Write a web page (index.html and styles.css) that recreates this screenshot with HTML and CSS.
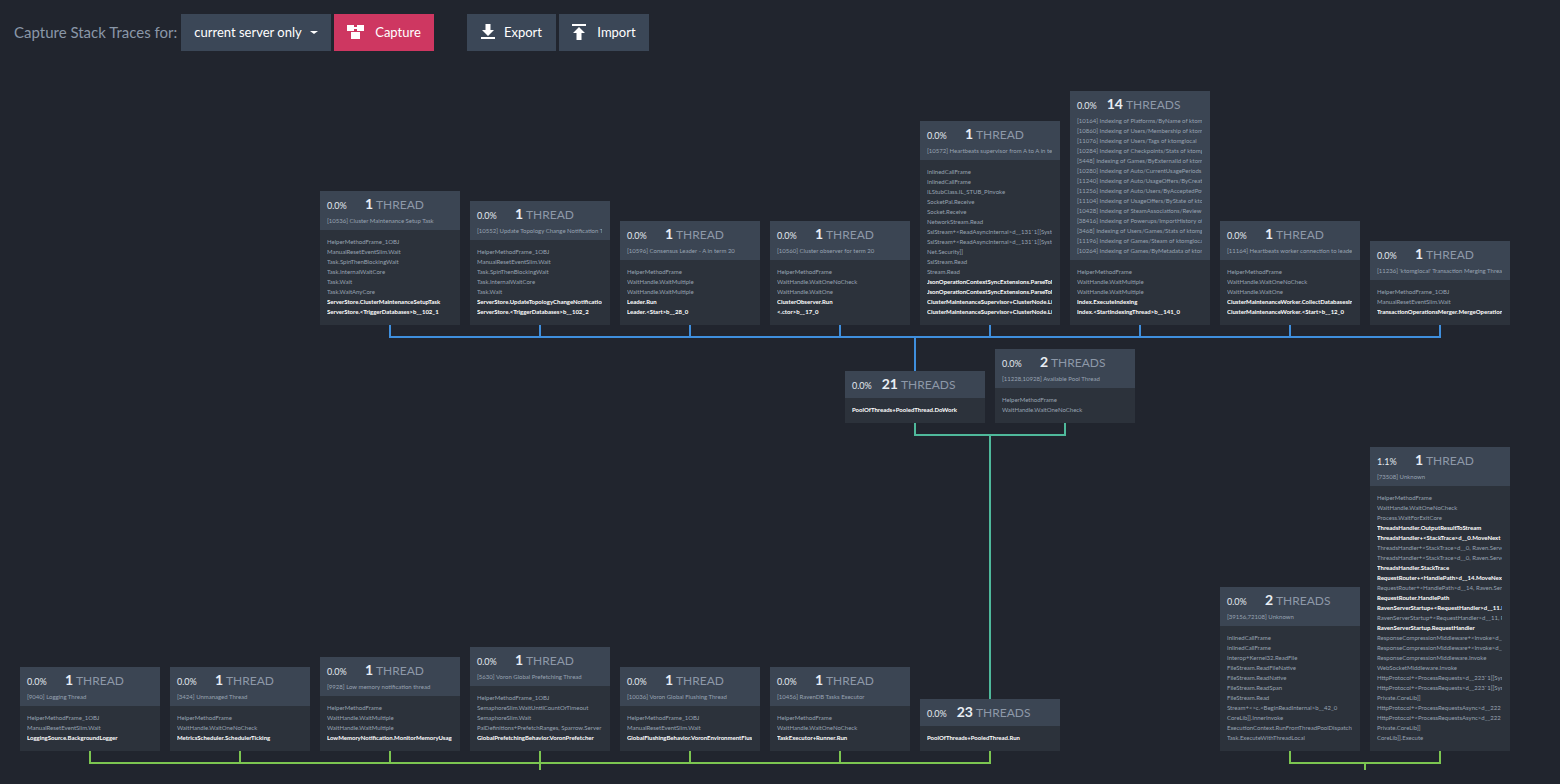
FILE: index.html
```html
<!DOCTYPE html>
<html lang="en">
<head>
<meta charset="utf-8">
<title>Capture Stack Traces</title>
<link rel="stylesheet" href="styles.css">
</head>
<body>
<header class="toolbar">
  <span class="toolbar-label">Capture Stack Traces for:</span>
  <button class="btn btn-select">current server only<span class="caret"></span></button>
  <button class="btn btn-capture">
    <svg class="icon" width="17" height="14" viewBox="0 0 17 14"><path fill="#fff" d="M0 0h7v2h3V0h7v6H10V4H7v2H0zM4 7h9v7H4z"/></svg>
    Capture
  </button>
  <button class="btn btn-export">
    <svg class="icon icon-tight" width="14" height="15" viewBox="0 0 14 15"><path fill="#fff" d="M4.500 0h5v6H13l-6 6-6-6h3.500zM0 13h14v2H0z"/></svg>
    Export
  </button>
  <button class="btn btn-import">
    <svg class="icon" width="14" height="16" viewBox="0 0 14 16"><path fill="#fff" d="M0 0h14v2H0zM7 3l6 6H9.500v7h-5V9H1z"/></svg>
    Import
  </button>
</header>

<main class="canvas">
  <svg class="wires" width="1560" height="784" viewBox="0 0 1560 784">
    <g class="wire-blue">
      <path d="M390 325V337H1440V325M540 325V337M690 325V337M840 325V337M990 325V337M1140 325V337M1290 325V337M915 337V372"/>
    </g>
    <g class="wire-teal">
      <path d="M915 423V435H1065V423M990 435V700"/>
    </g>
    <g class="wire-green">
      <path d="M90 751V763H990V751M240 751V763M390 751V763M540 751V770M690 751V763M840 751V763M1290 751V763H1440V751M1365 763V770"/>
    </g>
  </svg>

  <section class="level level-top">
    <article class="card">
      <div class="card-head"><div class="head-row"><span class="pct">0.0%</span><b class="count">1</b><span class="unit">THREAD</span></div><div class="sub">[10536] Cluster Maintenance Setup Task</div></div>
      <div class="card-body">
        <div>HelperMethodFrame_1OBJ</div><div>ManualResetEventSlim.Wait</div><div>Task.SpinThenBlockingWait</div><div>Task.InternalWaitCore</div><div>Task.Wait</div><div>Task.WaitAnyCore</div>
        <div class="own">ServerStore.ClusterMaintenanceSetupTask</div><div class="own">ServerStore.&lt;TriggerDatabases&gt;b__102_1</div>
      </div>
    </article>
    <article class="card">
      <div class="card-head"><div class="head-row"><span class="pct">0.0%</span><b class="count">1</b><span class="unit">THREAD</span></div><div class="sub">[10552] Update Topology Change Notification Task</div></div>
      <div class="card-body">
        <div>HelperMethodFrame_1OBJ</div><div>ManualResetEventSlim.Wait</div><div>Task.SpinThenBlockingWait</div><div>Task.InternalWaitCore</div><div>Task.Wait</div>
        <div class="own">ServerStore.UpdateTopologyChangeNotification</div><div class="own">ServerStore.&lt;TriggerDatabases&gt;b__102_2</div>
      </div>
    </article>
    <article class="card">
      <div class="card-head"><div class="head-row"><span class="pct">0.0%</span><b class="count">1</b><span class="unit">THREAD</span></div><div class="sub">[10596] Consensus Leader - A in term 20</div></div>
      <div class="card-body">
        <div>HelperMethodFrame</div><div>WaitHandle.WaitMultiple</div><div>WaitHandle.WaitMultiple</div>
        <div class="own">Leader.Run</div><div class="own">Leader.&lt;Start&gt;b__28_0</div>
      </div>
    </article>
    <article class="card">
      <div class="card-head"><div class="head-row"><span class="pct">0.0%</span><b class="count">1</b><span class="unit">THREAD</span></div><div class="sub">[10560] Cluster observer for term 20</div></div>
      <div class="card-body">
        <div>HelperMethodFrame</div><div>WaitHandle.WaitOneNoCheck</div><div>WaitHandle.WaitOne</div>
        <div class="own">ClusterObserver.Run</div><div class="own">&lt;.ctor&gt;b__17_0</div>
      </div>
    </article>
    <article class="card">
      <div class="card-head"><div class="head-row"><span class="pct">0.0%</span><b class="count">1</b><span class="unit">THREAD</span></div><div class="sub">[10572] Heartbeats supervisor from A to A in term 20</div></div>
      <div class="card-body">
        <div>InlinedCallFrame</div><div>InlinedCallFrame</div><div>ILStubClass.IL_STUB_PInvoke</div><div>SocketPal.Receive</div><div>Socket.Receive</div><div>NetworkStream.Read</div><div>SslStream+&lt;ReadAsyncInternal&gt;d__131`1[[System</div><div>SslStream+&lt;ReadAsyncInternal&gt;d__131`1[[System</div><div>Net.Security]]</div><div>SslStream.Read</div><div>Stream.Read</div>
        <div class="own">JsonOperationContextSyncExtensions.ParseToMemory</div><div class="own">JsonOperationContextSyncExtensions.ParseToMemory</div><div class="own">ClusterMaintenanceSupervisor+ClusterNode.Listen</div><div class="own">ClusterMaintenanceSupervisor+ClusterNode.Listen</div>
      </div>
    </article>
    <article class="card">
      <div class="card-head"><div class="head-row"><span class="pct">0.0%</span><b class="count">14</b><span class="unit">THREADS</span></div>
        <div class="sub">[10164] Indexing of Platforms/ByName of ktomglocal</div><div class="sub">[10860] Indexing of Users/Membership of ktomglocal</div><div class="sub">[11076] Indexing of Users/Tags of ktomglocal</div><div class="sub">[10284] Indexing of Checkpoints/Stats of ktomglocal</div><div class="sub">[5448] Indexing of Games/ByExternalId of ktomglocal</div><div class="sub">[10280] Indexing of Auto/CurrentUsagePeriods</div><div class="sub">[11240] Indexing of Auto/UsageOffers/ByCreated</div><div class="sub">[11256] Indexing of Auto/Users/ByAcceptedPowerups</div><div class="sub">[11104] Indexing of UsageOffers/ByState of ktomglocal</div><div class="sub">[10428] Indexing of SteamAssociations/Review-Stats</div><div class="sub">[38416] Indexing of Powerups/ImportHistory of ktomglocal</div><div class="sub">[3468] Indexing of Users/Games/Stats of ktomglocal</div><div class="sub">[11196] Indexing of Games/Steam of ktomglocal</div><div class="sub">[10264] Indexing of Games/ByMetadata of ktomglocal</div>
      </div>
      <div class="card-body">
        <div>HelperMethodFrame</div><div>WaitHandle.WaitMultiple</div><div>WaitHandle.WaitMultiple</div>
        <div class="own">Index.ExecuteIndexing</div><div class="own">Index.&lt;StartIndexingThread&gt;b__141_0</div>
      </div>
    </article>
    <article class="card">
      <div class="card-head"><div class="head-row"><span class="pct">0.0%</span><b class="count">1</b><span class="unit">THREAD</span></div><div class="sub">[11164] Heartbeats worker connection to leader</div></div>
      <div class="card-body">
        <div>HelperMethodFrame</div><div>WaitHandle.WaitOneNoCheck</div><div>WaitHandle.WaitOne</div>
        <div class="own">ClusterMaintenanceWorker.CollectDatabasesInfo</div><div class="own">ClusterMaintenanceWorker.&lt;Start&gt;b__12_0</div>
      </div>
    </article>
    <article class="card">
      <div class="card-head"><div class="head-row"><span class="pct">0.0%</span><b class="count">1</b><span class="unit">THREAD</span></div><div class="sub">[11236] 'ktomglocal' Transaction Merging Thread</div></div>
      <div class="card-body">
        <div>HelperMethodFrame_1OBJ</div><div>ManualResetEventSlim.Wait</div>
        <div class="own">TransactionOperationsMerger.MergeOperationThreadProc</div>
      </div>
    </article>
  </section>

  <section class="level level-mid">
    <article class="card">
      <div class="card-head"><div class="head-row"><span class="pct">0.0%</span><b class="count">21</b><span class="unit">THREADS</span></div></div>
      <div class="card-body"><div class="own">PoolOfThreads+PooledThread.DoWork</div></div>
    </article>
    <article class="card">
      <div class="card-head"><div class="head-row"><span class="pct">0.0%</span><b class="count">2</b><span class="unit">THREADS</span></div><div class="sub">[11228,10928] Available Pool Thread</div></div>
      <div class="card-body"><div>HelperMethodFrame</div><div>WaitHandle.WaitOneNoCheck</div></div>
    </article>
  </section>

  <section class="level level-low-left">
    <article class="card">
      <div class="card-head"><div class="head-row"><span class="pct">0.0%</span><b class="count">1</b><span class="unit">THREAD</span></div><div class="sub">[9040] Logging Thread</div></div>
      <div class="card-body"><div>HelperMethodFrame_1OBJ</div><div>ManualResetEventSlim.Wait</div><div class="own">LoggingSource.BackgroundLogger</div></div>
    </article>
    <article class="card">
      <div class="card-head"><div class="head-row"><span class="pct">0.0%</span><b class="count">1</b><span class="unit">THREAD</span></div><div class="sub">[3424] Unmanaged Thread</div></div>
      <div class="card-body"><div>HelperMethodFrame</div><div>WaitHandle.WaitOneNoCheck</div><div class="own">MetricsScheduler.SchedulerTicking</div></div>
    </article>
    <article class="card">
      <div class="card-head"><div class="head-row"><span class="pct">0.0%</span><b class="count">1</b><span class="unit">THREAD</span></div><div class="sub">[9928] Low memory notification thread</div></div>
      <div class="card-body"><div>HelperMethodFrame</div><div>WaitHandle.WaitMultiple</div><div>WaitHandle.WaitMultiple</div><div class="own">LowMemoryNotification.MonitorMemoryUsage</div></div>
    </article>
    <article class="card">
      <div class="card-head"><div class="head-row"><span class="pct">0.0%</span><b class="count">1</b><span class="unit">THREAD</span></div><div class="sub">[5630] Voron Global Prefetching Thread</div></div>
      <div class="card-body"><div>HelperMethodFrame_1OBJ</div><div>SemaphoreSlim.WaitUntilCountOrTimeout</div><div>SemaphoreSlim.Wait</div><div>PalDefinitions+PrefetchRanges, Sparrow.Server</div><div class="own">GlobalPrefetchingBehavior.VoronPrefetcher</div></div>
    </article>
    <article class="card">
      <div class="card-head"><div class="head-row"><span class="pct">0.0%</span><b class="count">1</b><span class="unit">THREAD</span></div><div class="sub">[10036] Voron Global Flushing Thread</div></div>
      <div class="card-body"><div>HelperMethodFrame_1OBJ</div><div>ManualResetEventSlim.Wait</div><div class="own">GlobalFlushingBehavior.VoronEnvironmentFlushing</div></div>
    </article>
    <article class="card">
      <div class="card-head"><div class="head-row"><span class="pct">0.0%</span><b class="count">1</b><span class="unit">THREAD</span></div><div class="sub">[10456] RavenDB Tasks Executor</div></div>
      <div class="card-body"><div>HelperMethodFrame</div><div>WaitHandle.WaitOneNoCheck</div><div class="own">TaskExecutor+Runner.Run</div></div>
    </article>
    <article class="card">
      <div class="card-head"><div class="head-row"><span class="pct">0.0%</span><b class="count">23</b><span class="unit">THREADS</span></div></div>
      <div class="card-body"><div class="own">PoolOfThreads+PooledThread.Run</div></div>
    </article>
  </section>

  <section class="level level-low-right">
    <article class="card">
      <div class="card-head"><div class="head-row"><span class="pct">0.0%</span><b class="count">2</b><span class="unit">THREADS</span></div><div class="sub">[39156,72108] Unknown</div></div>
      <div class="card-body">
        <div>InlinedCallFrame</div><div>InlinedCallFrame</div><div>Interop+Kernel32.ReadFile</div><div>FileStream.ReadFileNative</div><div>FileStream.ReadNative</div><div>FileStream.ReadSpan</div><div>FileStream.Read</div><div>Stream+&lt;&gt;c.&lt;BeginReadInternal&gt;b__42_0</div><div>CoreLib]].InnerInvoke</div><div>ExecutionContext.RunFromThreadPoolDispatchLoop</div><div>Task.ExecuteWithThreadLocal</div>
      </div>
    </article>
    <article class="card">
      <div class="card-head"><div class="head-row"><span class="pct">1.1%</span><b class="count">1</b><span class="unit">THREAD</span></div><div class="sub">[73508] Unknown</div></div>
      <div class="card-body">
        <div>HelperMethodFrame</div><div>WaitHandle.WaitOneNoCheck</div><div>Process.WaitForExitCore</div>
        <div class="own">ThreadsHandler.OutputResultToStream</div><div class="own">ThreadsHandler+&lt;StackTrace&gt;d__0.MoveNext</div>
        <div>ThreadsHandler+&lt;StackTrace&gt;d__0, Raven.Server</div><div>ThreadsHandler+&lt;StackTrace&gt;d__0, Raven.Server</div>
        <div class="own">ThreadsHandler.StackTrace</div><div class="own">RequestRouter+&lt;HandlePath&gt;d__14.MoveNext</div>
        <div>RequestRouter+&lt;HandlePath&gt;d__14, Raven.Server</div>
        <div class="own">RequestRouter.HandlePath</div><div class="own">RavenServerStartup+&lt;RequestHandler&gt;d__11.MoveNext</div>
        <div>RavenServerStartup+&lt;RequestHandler&gt;d__11, Raven</div>
        <div class="own">RavenServerStartup.RequestHandler</div>
        <div>ResponseCompressionMiddleware+&lt;Invoke&gt;d__3</div><div>ResponseCompressionMiddleware+&lt;Invoke&gt;d__3</div><div>ResponseCompressionMiddleware.Invoke</div><div>WebSocketMiddleware.Invoke</div><div>HttpProtocol+&lt;ProcessRequests&gt;d__223`1[[System</div><div>HttpProtocol+&lt;ProcessRequests&gt;d__223`1[[System</div><div>Private.CoreLib]]</div><div>HttpProtocol+&lt;ProcessRequestsAsync&gt;d__222</div><div>HttpProtocol+&lt;ProcessRequestsAsync&gt;d__222</div><div>Private.CoreLib]]</div><div>CoreLib]].Execute</div>
      </div>
    </article>
  </section>
</main>
</body>
</html>
```

FILE: styles.css
```css
* { box-sizing: border-box; }

html, body {
  margin: 0;
  height: 784px;
  overflow: hidden;
  background: #21252e;
  font-family: Lato, "Open Sans", sans-serif;
}

body {
  position: relative;
  width: 1560px;
}

.toolbar {
  display: flex;
  align-items: center;
  height: 37px;
  margin-top: 14px;
  padding-left: 14px;
  position: absolute;
  top: 0;
  left: 0;
}

.toolbar-label {
  width: 164px;
  font-size: 15px;
  line-height: 18px;
  padding-bottom: 2px;
  color: #8a97a8;
  margin-right: 3px;
  white-space: nowrap;
}

.btn {
  height: 37px;
  border: 0;
  margin: 0;
  padding: 0 0 2px;
  display: flex;
  align-items: center;
  justify-content: center;
  font-family: inherit;
  font-size: 13px;
  color: #fff;
  background: #3b4757;
}

.btn-select { width: 150px; margin-right: 3px; }
.btn-capture { width: 100px; background: #ce3761; margin-right: 33px; }
.btn-export { width: 89px; margin-right: 3px; }
.btn-import { width: 90px; }

.icon { margin-right: 11px; flex: none; }
.icon-tight { margin-right: 9px; }

.caret {
  width: 0;
  height: 0;
  margin-left: 8px;
  margin-top: 2px;
  border-left: 4px solid transparent;
  border-right: 4px solid transparent;
  border-top: 3px solid #fff;
}

.canvas {
  position: absolute;
  inset: 0;
}

.wires {
  position: absolute;
  top: 0;
  left: 0;
  fill: none;
  stroke-width: 2;
}

.wire-blue { stroke: #3f8fdd; }
.wire-teal { stroke: #4fb99b; }
.wire-green { stroke: #7cc651; }

.level {
  position: absolute;
  display: flex;
  align-items: flex-end;
  gap: 10px;
}

.level-top { left: 320px; top: 91px; height: 234px; }
.level-mid { left: 845px; top: 349px; height: 74px; }
.level-low-left { left: 20px; top: 647px; height: 104px; }
.level-low-right { left: 1220px; top: 447px; height: 304px; }

.card {
  width: 140px;
  background: #2c323b;
  overflow: hidden;
}

.card-head {
  background: #3b4553;
  padding: 4px 8px 2px 7px;
}

.head-row {
  display: flex;
  align-items: center;
  height: 20px;
  margin-bottom: 1px;
}

.pct {
  width: 32px;
  font-size: 9px;
  color: #e4e9ef;
}

.count {
  width: 14px;
  margin-right: 3px;
  font-size: 14px;
  line-height: 18px;
  padding-bottom: 2px;
  font-weight: 700;
  color: #e9eef4;
  display: flex;
  justify-content: flex-end;
}

.unit {
  font-size: 12px;
  line-height: 18px;
  padding-bottom: 1px;
  color: #8d98a8;
  white-space: nowrap;
}

.sub {
  height: 10px;
  line-height: 10px;
  font-size: 6px;
  color: #98a3b2;
  white-space: nowrap;
  overflow: hidden;
}

.card-head > .sub:last-child { margin-bottom: 2px; }

.card-body {
  padding: 7px 8px 8px 7px;
  font-size: 6px;
  line-height: 10px;
  color: #98a3b2;
}

.card-body > div {
  height: 10px;
  white-space: nowrap;
  overflow: hidden;
}

.card-body > .own {
  color: #fff;
  font-weight: 700;
}
```
